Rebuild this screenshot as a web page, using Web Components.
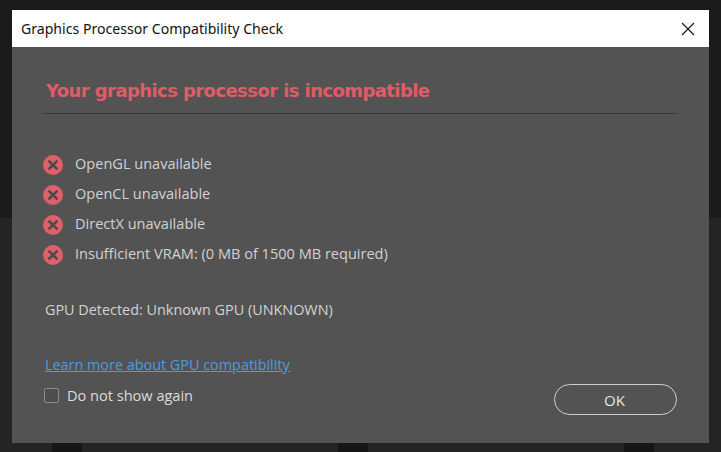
<!DOCTYPE html>
<html>
<head>
<meta charset="utf-8">
<style>
html,body{margin:0;height:452px;overflow:hidden;background:#1b1b1b}
</style>
</head>
<body>
<gpu-backdrop>
  <gpu-dialog heading="Graphics Processor Compatibility Check">
    <gpu-error>OpenGL unavailable</gpu-error>
    <gpu-error>OpenCL unavailable</gpu-error>
    <gpu-error>DirectX unavailable</gpu-error>
    <gpu-error>Insufficient VRAM: (0 MB of 1500 MB required)</gpu-error>
  </gpu-dialog>
</gpu-backdrop>
<script>
class GpuBackdrop extends HTMLElement{
    constructor(){
        super();
        this.attachShadow({mode:'open'}).innerHTML=`<style>
        :host{display:block;height:452px;box-sizing:border-box;padding:10px 12px 9px 12px;
            background:
              linear-gradient(#161616,#161616) 52px 443px/30px 9px no-repeat,
              linear-gradient(#161616,#161616) 338px 443px/30px 9px no-repeat,
              linear-gradient(#161616,#161616) 624px 443px/30px 9px no-repeat,
              linear-gradient(#1b1b1b 218px,#242424 218px)}
        </style><slot></slot>`
    }
}
class GpuError extends HTMLElement{
    constructor(){
        super();
        this.attachShadow({mode:'open'}).innerHTML=`<style>
        :host{display:flex;align-items:flex-start;gap:12px;height:30px;color:#d2d2d2;
            font:14.55px/18px "Open Sans",sans-serif}
        svg{width:20px;height:20px;margin-top:3px;flex:none}
        span{margin-top:2px}
        </style>
        <svg viewBox="0 0 20 20"><circle cx="10" cy="10" r="10" fill="#e0606a"/><path d="M6.3 6.3l7.4 7.4M13.7 6.3l-7.4 7.4" stroke="#4a4a4a" stroke-width="2.6" stroke-linecap="round"/></svg>
        <span><slot></slot></span>`
    }
}
class GpuDialog extends HTMLElement{
    constructor(){
        super();
        this.attachShadow({mode:'open'}).innerHTML=`<style>
        :host{display:flex;flex-direction:column;height:433px;background:#535353;color:#d2d2d2;
            font:14.4px/18px "Open Sans",sans-serif}
        .bar{display:flex;align-items:center;justify-content:space-between;height:37px;flex:none;
            background:#fff;color:#111;padding:0 14px 0 9px;font:14.1px "Noto Sans",sans-serif}
        .bar svg{width:14px;height:14px}
        .body{flex:1;display:flex;flex-direction:column;padding:0 32px 0 31px}
        h1{margin:32px 0 0 3px;font:bold 18px/24px "DejaVu Sans",sans-serif;color:#e05c66;letter-spacing:-.58px}
        hr{margin:10px 0 0;border:0;border-top:1px solid #3a3a3a}
        .errs{margin-top:38px}
        .gpu{margin:29px 0 0 2px}
        a{margin:37px 0 0 2px;color:#4d9be0;text-decoration:underline;align-self:flex-start}
        .foot{display:flex;justify-content:space-between;align-items:flex-start;margin-top:3px}
        label{display:flex;align-items:center;gap:8px;margin-top:9px;color:#dcdcdc;font-size:14.55px}
        .box{width:13px;height:13px;border:1px solid #8c8c8c;border-radius:2px;background:#4e4e4e;margin-left:1px}
        button{width:123px;height:31px;margin-top:7px;border:1.5px solid #cfcfcf;border-radius:16px;background:none;
            color:#e6e6e6;font:15px "Open Sans",sans-serif;padding:0 2px 0 0}
        </style>
        <div class="bar"><span>${this.getAttribute('heading')}</span>
            <svg viewBox="0 0 14 14"><path d="M1 1l12 12M13 1L1 13" stroke="#111" stroke-width="1.1"/></svg></div>
        <div class="body">
            <h1>Your graphics processor is incompatible</h1>
            <hr>
            <div class="errs"><slot></slot></div>
            <div class="gpu">GPU Detected: Unknown GPU (UNKNOWN)</div>
            <a href="#">Learn more about GPU compatibility</a>
            <div class="foot">
                <label><span class="box"></span>Do not show again</label>
                <button>OK</button>
            </div>
        </div>`
    }
}
customElements.define('gpu-backdrop',GpuBackdrop)
customElements.define('gpu-error',GpuError)
customElements.define('gpu-dialog',GpuDialog)
</script>
</body>
</html>
